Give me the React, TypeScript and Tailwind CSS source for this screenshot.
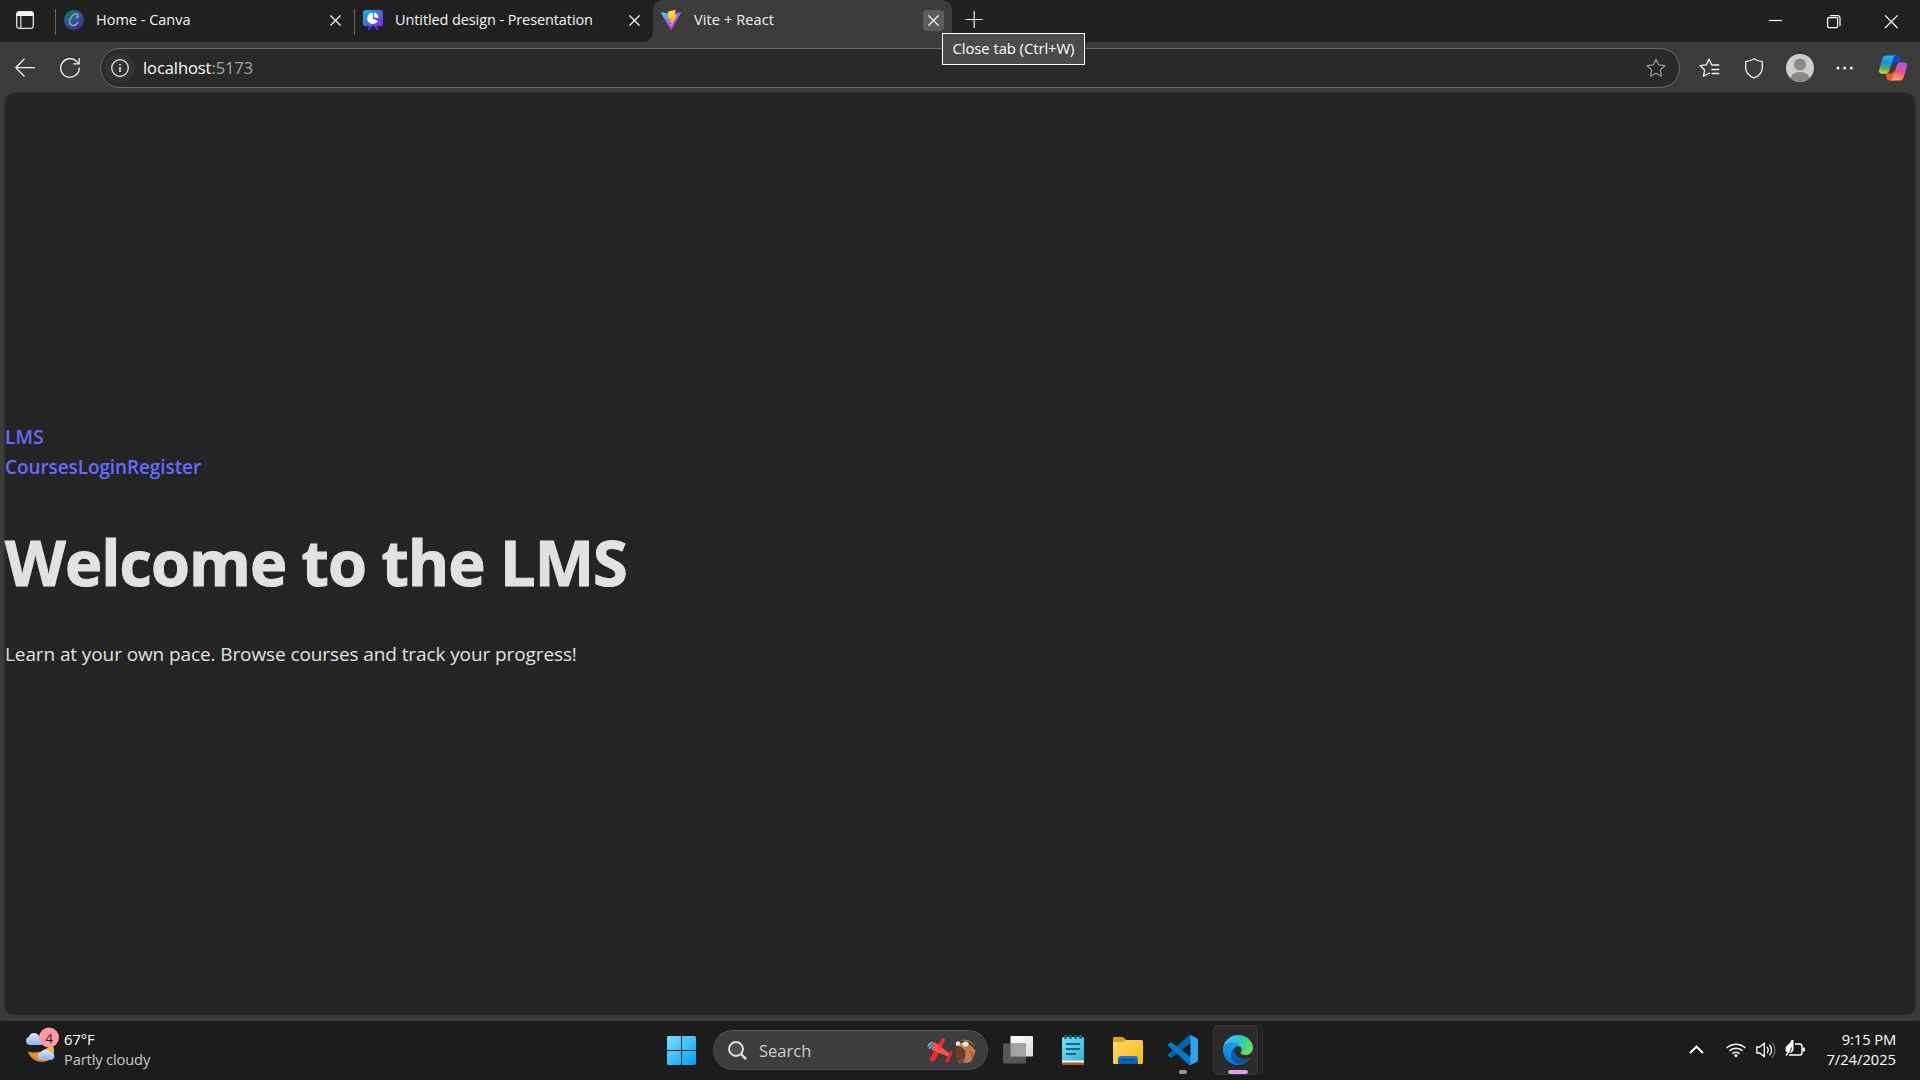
import React from "react";

const font = "font-['Open_Sans','Noto_Sans',sans-serif]";

function CloseX({ size = 11 }: { size?: number }) {
  return (
    <svg width={size} height={size} viewBox="0 0 11 11" fill="none" stroke="#f0f0f0" strokeWidth="1.3">
      <path d="M.4.4 10.6 10.6M10.6.4.4 10.6" />
    </svg>
  );
}

function CanvaIcon() {
  return (
    <svg width="20" height="20" viewBox="0 0 20 20">
      <defs>
        <linearGradient id="canva" x1="0.1" y1="0.1" x2="0.8" y2="1">
          <stop offset="0" stopColor="#12777c" />
          <stop offset="0.55" stopColor="#2b5590" />
          <stop offset="1" stopColor="#4c2689" />
        </linearGradient>
      </defs>
      <circle cx="10" cy="10" r="10" fill="url(#canva)" />
      <path d="M12.300 7.600c1.300-.3 2-1.300 1.800-2.300-.3-1.200-1.600-1.500-3-1.100C8 5.100 5.600 8.500 5.600 11.600c0 2.500 1.300 4 3.500 4 2 0 3.600-1.200 4.700-3" fill="none" stroke="#a6afb8" strokeWidth="1.300" strokeLinecap="round" />
    </svg>
  );
}

function PresentationIcon() {
  return (
    <svg width="20" height="20" viewBox="0 0 20 20">
      <defs>
        <linearGradient id="pres" x1="0" y1="0" x2="0.9" y2="1">
          <stop offset="0" stopColor="#00c4cc" />
          <stop offset="0.5" stopColor="#3f6fe0" />
          <stop offset="1" stopColor="#7d2ae8" />
        </linearGradient>
      </defs>
      <path d="M7.500 15.500 6 19M12.500 15.500l1.600 3.500" stroke="#6a22ee" strokeWidth="2.200" strokeLinecap="round" />
      <rect width="20" height="16.300" rx="2.500" fill="url(#pres)" />
      <path d="M9.800 2.800v5.700l5 2.600A5.600 5.600 0 1 1 9.800 2.800z" fill="#fff" />
      <path d="M11.100 2.500a5 5 0 0 1 4.300 5.500l-4.300-.6z" fill="#fff" />
    </svg>
  );
}

function ViteIcon() {
  return (
    <svg width="20" height="20" viewBox="0 0 256 257">
      <defs>
        <linearGradient id="va" x1="-.828%" x2="57.636%" y1="7.652%" y2="78.411%">
          <stop offset="0%" stopColor="#41D1FF" />
          <stop offset="100%" stopColor="#BD34FE" />
        </linearGradient>
        <linearGradient id="vb" x1="43.376%" x2="50.316%" y1="2.242%" y2="89.030%">
          <stop offset="0%" stopColor="#FFEA83" />
          <stop offset="8.333%" stopColor="#FFDD35" />
          <stop offset="100%" stopColor="#FFA800" />
        </linearGradient>
      </defs>
      <path fill="url(#va)" d="M255.153 37.938 134.897 252.976c-2.483 4.440-8.862 4.466-11.382.048L.875 37.958c-2.746-4.814 1.371-10.646 6.827-9.670l120.385 21.517a6.537 6.537 0 0 0 2.322-.004l117.867-21.483c5.438-.991 9.574 4.796 6.877 9.620Z" />
      <path fill="url(#vb)" d="M185.432.063 96.440 17.501a3.268 3.268 0 0 0-2.634 3.014l-5.474 92.456a3.268 3.268 0 0 0 3.997 3.378l24.777-5.718c2.318-.535 4.413 1.507 3.936 3.838l-7.361 36.047c-.495 2.426 1.782 4.500 4.151 3.780l15.304-4.649c2.372-.720 4.652 1.360 4.150 3.788l-11.698 56.621c-.732 3.542 3.979 5.473 5.943 2.437l1.313-2.028 72.516-144.720c1.215-2.423-.880-5.186-3.540-4.672l-25.505 4.922c-2.396.462-4.435-1.770-3.759-4.114l16.646-57.705c.677-2.350-1.370-4.583-3.769-4.113Z" />
    </svg>
  );
}

function TitleBar() {
  return (
    <header className="relative flex h-[42px] bg-[#202020] text-[14.5px] leading-[20px] text-[#f3f3f3]">
      <div className="flex w-[55px] shrink-0 pl-4 pt-[11px]">
        <svg width="18" height="18" viewBox="0 0 18 18" fill="none">
          <rect x=".7" y=".7" width="16.600" height="16.600" rx="2.500" stroke="#e0e0e0" strokeWidth="1.300" />
          <path d="M.5 5V3A2.500 2.500 0 0 1 3 .5h12A2.500 2.500 0 0 1 17.500 3v2z" fill="#f3f3f3" />
          <path d="M4.800 5v12.300" stroke="#e0e0e0" strokeWidth="1.200" />
        </svg>
      </div>
      <div className="flex w-[299px] shrink-0 pt-[10px]">
        <div className="-mt-px h-[26px] w-px bg-[#666]" />
        <div className="ml-2"><CanvaIcon /></div>
        <span className="ml-[12px] grow whitespace-nowrap">Home - Canva</span>
        <div className="mr-[13px] mt-[5px]"><CloseX /></div>
      </div>
      <div className="flex w-[299px] shrink-0 pt-[10px]">
        <div className="-mt-px h-[26px] w-px bg-[#666]" />
        <div className="ml-2"><PresentationIcon /></div>
        <span className="ml-[12px] grow whitespace-nowrap tracking-[-0.1px]">Untitled design - Presentation</span>
        <div className="mr-[13px] mt-[5px]"><CloseX /></div>
      </div>
      <div className="relative flex w-[299px] shrink-0 rounded-t-[10px] bg-[#3b3b3b] pt-[10px]">
        <svg className="absolute -left-[10px] bottom-0" width="10" height="10"><path d="M10 0v10H0A10 10 0 0 0 10 0z" fill="#3b3b3b" /></svg>
        <svg className="absolute -right-[10px] bottom-0" width="10" height="10"><path d="M0 0v10h10A10 10 0 0 1 0 0z" fill="#3b3b3b" /></svg>
        <div className="ml-2"><ViteIcon /></div>
        <span className="ml-[13px] grow whitespace-nowrap tracking-[0.12px]">Vite + React</span>
        <div className="mr-2 flex h-[21px] w-[21px] items-center justify-center rounded-[4px] bg-[#5c5c5c]"><CloseX /></div>
      </div>
      <svg className="ml-[13px] mt-[11px]" width="18" height="18" stroke="#f3f3f3" strokeWidth="1.200"><path d="M.5 8.500h17M9.200 0v17" /></svg>
      <div className="ml-auto flex pr-[22px] pt-[15px]">
        <svg width="130" height="14" viewBox="0 0 130 14" fill="none" stroke="#fff" strokeWidth="1.200">
          <path d="M1 5.500h13" />
          <rect x="59.600" y="2.600" width="10" height="10" rx="1" />
          <path d="M62 .6h7.500a2.500 2.500 0 0 1 2.500 2.500V11" />
          <path d="m117 .4 12.600 12.600m0-12.600L117 13" />
        </svg>
      </div>
    </header>
  );
}

const star = "M10 1.200l2.700 5.700 6.200.8-4.600 4.200 1.200 6.300L10 15.200 4.500 18.200l1.200-6.300L1.100 7.700l6.200-.8z";

function CopilotIcon() {
  return (
    <svg width="28" height="26" viewBox="0 0 28 26">
      <defs>
        <linearGradient id="c1" x1="0.5" y1="0" x2="0.3" y2="1">
          <stop offset="0" stopColor="#18b6f5" />
          <stop offset="0.4" stopColor="#1d8fe0" />
          <stop offset="0.7" stopColor="#47b06b" />
          <stop offset="1" stopColor="#f2cf19" />
        </linearGradient>
        <linearGradient id="c2" x1="0.7" y1="0" x2="0.4" y2="1">
          <stop offset="0" stopColor="#a457e8" />
          <stop offset="0.5" stopColor="#ec4f8c" />
          <stop offset="1" stopColor="#ffa865" />
        </linearGradient>
      </defs>
      <path d="M14 .5h3.500c2 0 2.800 1.200 3.300 3l1 3.500h-4.600c-2.200 0-3 1.200-3.600 3L11 4z" fill="#1747c8" />
      <path d="M7 18.500h5.500L15 16l2.500 6-2 3.500h-5c-1.900 0-2.500-1.200-3-3z" fill="#f2552c" />
      <path d="M7.500.5h9.300c-1.800.3-2.400 1.800-3 3.900L10.500 15c-.8 2.700-1.900 3.800-4.300 3.800H3c-2.700 0-3.400-2.200-2.700-4.600L3 4.500C3.800 1.800 5 .5 7.500.5z" fill="url(#c1)" />
      <path d="M20.500 25.500h-9.300c1.800-.3 2.400-1.800 3-3.900L17.500 11c.8-2.700 1.900-3.800 4.300-3.800H25c2.700 0 3.400 2.200 2.700 4.600L25 21.500c-.8 2.700-2 4-4.500 4z" fill="url(#c2)" />
    </svg>
  );
}

function Toolbar() {
  return (
    <div className="flex h-[51px] items-start bg-[#3b3b3b] pt-[6px]">
      <svg className="ml-[15px] mt-[10px]" width="20" height="20" fill="none" stroke="#f3f3f3" strokeWidth="1.300"><path d="M20 9.700H.8M9.500.7.8 9.700l8.700 8.800" /></svg>
      <svg className="ml-[25px] mt-[10px]" width="21" height="21" fill="none" stroke="#f3f3f3" strokeWidth="1.300"><path d="M19.300 9.800A9.300 9.300 0 1 1 17 3.900l2 1.900M19.200 0v5.900h-6" /></svg>
      <div className="ml-[19px] flex h-10 w-[1580px] items-center rounded-full border border-[#6b6b6b] bg-[#292929] pl-[4px]">
        <div className="flex h-[30px] w-[30px] items-center justify-center rounded-full bg-[#323232]">
          <svg width="18" height="18" fill="none" stroke="#f3f3f3" strokeWidth="1.200"><circle cx="9" cy="9" r="8.300" /><path d="M9 8v5M9 5v1.500" strokeWidth="1.500" /></svg>
        </div>
        <div className="-mt-px ml-[8px] grow text-[16.500px] leading-6 tracking-[-0.08px] text-white">localhost<span className="text-[#a5a5a5]">:5173</span></div>
        <svg className="mr-[13px]" width="20" height="20" fill="none" stroke="#9a9a9a" strokeWidth="1.200" strokeLinejoin="round"><path d={star} /></svg>
      </div>
      <svg className="ml-[19px] mt-[10px]" width="21" height="20" fill="none" stroke="#f3f3f3" strokeWidth="1.300" strokeLinejoin="round">
        <path d="M10.800 15.500 10 15.200 4.500 18.200l1.200-6.300L1.100 7.700l6.200-.8L10 1.200l2.700 5.700" /><path d="M12.500 7h7.800M12.500 11.500h7.800M12.500 15.500h7.800" />
      </svg>
      <svg className="ml-[25px] mt-[10px]" width="18" height="21" fill="none" stroke="#f3f3f3" strokeWidth="1.300" strokeLinejoin="round"><path d="M9 .8C11.500 2.500 14.300 3.500 17.300 3.700V9.500c0 5-3.300 8.500-8.300 10.300C4 18 .7 14.500.7 9.500V3.700C3.700 3.500 6.500 2.500 9 .8z" /></svg>
      <svg className="ml-[23px] mt-[6px]" width="28" height="28">
        <defs><clipPath id="av"><circle cx="14" cy="14" r="14" /></clipPath></defs>
        <g clipPath="url(#av)"><rect width="28" height="28" fill="#cfcdcb" /><circle cx="14" cy="10.500" r="6" fill="#8b8886" /><ellipse cx="14" cy="26" rx="10" ry="8" fill="#8b8886" /></g>
      </svg>
      <svg className="ml-[22px] mt-[18px]" width="18" height="4" fill="#f3f3f3"><circle cx="2" cy="2" r="1.500" /><circle cx="8.700" cy="2" r="1.500" /><circle cx="15.300" cy="2" r="1.500" /></svg>
      <div className="ml-[25px] mt-[7px]"><CopilotIcon /></div>
    </div>
  );
}

function Page() {
  return (
    <main className="mx-[5px] h-[922px] rounded-[10px] bg-[#242424] pt-[329px] shadow-[0_0_3px_rgba(0,0,0,0.35)]">
      <nav className="text-[19px] font-semibold leading-[30px] tracking-[-0.1px] text-[#646cff]">
        <div className="tracking-[0.2px]">LMS</div>
        <div className="flex"><a>Courses</a><a>Login</a><a>Register</a></div>
      </nav>
      <h1 className="mt-[45px] whitespace-nowrap text-[63px] font-bold leading-[70px] tracking-[-0.95px] text-[#e2e2e2] [-webkit-text-stroke:1px_#e2e2e2]">Welcome to the LMS</h1>
      <p className="mt-[42px] text-[19px] leading-[30px] tracking-[-0.1px] text-[#e2e2e2]">Learn at your own pace. Browse courses and track your progress!</p>
    </main>
  );
}

function WeatherIcon() {
  return (
    <svg width="36" height="36" viewBox="0 0 36 36">
      <defs>
        <linearGradient id="cl" x1="0" y1="0" x2="0" y2="1"><stop offset="0" stopColor="#e0ebff" /><stop offset="1" stopColor="#8db3f2" /></linearGradient>
        <linearGradient id="mo" x1="1" y1="0" x2="0" y2="1"><stop offset="0" stopColor="#ffcb3a" /><stop offset="1" stopColor="#e8701a" /></linearGradient>
      </defs>
      <path d="M26 16c4 4 4 11 0 15.500-6 6-20 4-23-7 9 3 20-1 23-8.500z" fill="url(#mo)" />
      <path d="M4.500 18A4.300 4.300 0 0 1 4 9.700 5.500 5.500 0 0 1 14 9a4.500 4.500 0 0 1 2 9z" fill="url(#cl)" />
      <path d="M16 33a3.800 3.800 0 0 1 0-7.500A5 5 0 0 1 25 25a4.100 4.100 0 0 1 1.500 8z" fill="url(#cl)" />
      <circle cx="24" cy="10.500" r="10" fill="#ff99a4" />
      <text x="24" y="15.500" textAnchor="middle" fontSize="13.500" fill="#1c1c1c" fontFamily="Open Sans">4</text>
    </svg>
  );
}

function SearchArt() {
  return (
    <svg width="50" height="26" viewBox="0 0 50 26">
      <path d="M15 .3c1.500-.6 3.500.3 3 2L8 22.500c-1 1.700-6 .5-5.500-1.500z" fill="#f6262d" />
      <path d="M2.500 6.500c1-2.500 4-3.500 6.500-1.500l13.500 10.500c1.500 1 1 3-.5 3.200L5.500 12.500z" fill="#fb5050" />
      <path d="M23.500 12.500c1.500-.2 2.500.7 2 2l-4 9c-.6 1.200-3.400 1-3-.8z" fill="#f0242b" />
      <circle cx="4" cy="7.500" r="3" fill="#56839c" /><path d="M.3 8.500 5 3.500M2 11l1.500-2" stroke="#9cc7db" strokeWidth="1" />
      <path d="M29 7c2-6 13-8 18.500 0 1 2 1 5 .5 8l-3.500 8c-5 3-11 2-13 1.500C29 20 28.500 13 29 7z" fill="#bd7c49" />
      <path d="M29 8c4 0 8 2 9.500 5.500C39 18 37 24 33 24.500c-5-2-4.500-10-4-16.500z" fill="#68401f" />
      <path d="M29 5c7-3 15-1 19.500 6" fill="none" stroke="#4e3019" strokeWidth="2" />
      <circle cx="31" cy="5.500" r="2.300" fill="#dce9ef" /><ellipse cx="38.500" cy="6" rx="3.200" ry="2.600" fill="#dce9ef" />
      <path d="M42 13c3 1 4 4 2 7" fill="none" stroke="#8a5229" strokeWidth="1" /><path d="m32 22 3-1 3 3-4 1.500z" fill="#55505f" />
    </svg>
  );
}

function NotepadIcon() {
  return (
    <svg width="22" height="30" viewBox="0 0 22 30">
      <defs><linearGradient id="np" x1="0" y1="0" x2="1" y2="1"><stop offset="0" stopColor="#7fe0f3" /><stop offset="1" stopColor="#35b0d5" /></linearGradient></defs>
      <rect y="24" width="22" height="6" rx="1" fill="#b25a1c" /><rect y="22" width="22" height="5.500" fill="#f3f3f3" />
      <path d="M0 3.500Q0 2 1.500 2h19Q22 2 22 3.500v22H0z" fill="url(#np)" />
      <path d="M3.500 0v4M8.500 0v4M13.500 0v4M18.500 0v4" stroke="#0b6a87" strokeWidth="2.400" />
      <path d="M4 9h14M4 14h14M4 19h10" stroke="#0b6a87" strokeWidth="1.900" />
    </svg>
  );
}

function FolderIcon() {
  return (
    <svg width="30" height="27" viewBox="0 0 30 27">
      <defs><linearGradient id="fo" x1="0" y1="0" x2="1" y2="1"><stop offset="0" stopColor="#ffdc70" /><stop offset="1" stopColor="#fbb80b" /></linearGradient>
        <linearGradient id="fb" x1="0" y1="0" x2="0" y2="1"><stop offset="0" stopColor="#1a7fd6" /><stop offset="1" stopColor="#075bb0" /></linearGradient></defs>
      <path d="M0 1.500Q0 0 1.500 0h7.500q1 0 2 1l3 2.500V8H0z" fill="#e3a006" />
      <path d="M0 5h10l3-2h15.500Q30 3 30 4.500v21Q30 27 28.500 27h-27Q0 27 0 25.500z" fill="url(#fo)" />
      <path d="M5 27v-5q0-3 3-3h14q3 0 3 3v5z" fill="url(#fb)" /><path d="M8.500 22.600h13" stroke="#053c7d" strokeWidth="1.200" />
    </svg>
  );
}

function CodeIcon() {
  return (
    <svg width="30" height="30" viewBox="0 0 100 100">
      <path d="M96.500 10.700 75.900.8a6.200 6.200 0 0 0-7.100 1.200L1.300 63.600a4.200 4.200 0 0 0 0 6.100l5.500 5a4.200 4.200 0 0 0 5.300.3l81.200-61.700c2.700-2 6.700-.1 6.700 3.300v-.2a6.200 6.200 0 0 0-3.500-5.700z" fill="#0065a9" />
      <path d="m96.500 89.300-20.600 9.900a6.200 6.200 0 0 1-7.100-1.200L1.300 36.400a4.200 4.200 0 0 1 0-6.100l5.500-5a4.200 4.200 0 0 1 5.300-.3l81.200 61.700c2.700 2 6.700.1 6.700-3.300v.2a6.200 6.200 0 0 1-3.500 5.700z" fill="#007acc" />
      <path d="M75.900 99.200a6.200 6.200 0 0 1-7.100-1.200c2.300 2.300 6.200.7 6.200-2.600V4.600C75 1.300 71.100-.3 68.800 2a6.200 6.200 0 0 1 7.100-1.200l20.600 9.900a6.200 6.200 0 0 1 3.500 5.700v67.200a6.200 6.200 0 0 1-3.500 5.700z" fill="#29a5f3" />
    </svg>
  );
}

function EdgeIcon() {
  return (
    <svg width="30" height="30" viewBox="0 0 256 256">
      <defs>
        <linearGradient id="e1" x1="0.2" x2="0.95" y1="0.5" y2="0.5"><stop offset="0" stopColor="#0c59a4" /><stop offset="1" stopColor="#114a8b" /></linearGradient>
        <linearGradient id="e2" x1="0.7" x2="0.3" y1="0.1" y2="0.9"><stop offset="0" stopColor="#1b9de2" /><stop offset="0.5" stopColor="#1595df" /><stop offset="1" stopColor="#0078d7" /></linearGradient>
        <linearGradient id="e3" x1="0" x2="1" y1="0.2" y2="0.6"><stop offset="0" stopColor="#35c1f1" /><stop offset="0.4" stopColor="#2fc2df" /><stop offset="0.75" stopColor="#43d08a" /><stop offset="1" stopColor="#6be34d" /></linearGradient>
      </defs>
      <path fill="url(#e1)" d="M231 190.500c-3.400 1.800-6.900 3.400-10.500 4.700a101.900 101.900 0 0 1-35.900 6.500c-47.300 0-88.500-32.500-88.500-74.300a31.500 31.500 0 0 1 16.400-27.300c-42.800 1.800-53.800 46.400-53.800 72.500 0 73.900 68.100 81.400 82.800 81.400 7.900 0 19.800-2.300 27-4.600l1.300-.4a128.300 128.300 0 0 0 66.600-52.800 4 4 0 0 0-5.400-5.700z" />
      <path fill="url(#e2)" d="M105.700 241.400a79.200 79.200 0 0 1-22.700-21.300 80.700 80.700 0 0 1 29.500-120c3.200-1.500 8.500-4.100 15.600-4a32.400 32.400 0 0 1 25.700 13 31.900 31.900 0 0 1 6.300 18.700c0-.2 24.500-79.600-80-79.600-43.900 0-80 41.600-80 78.200a130.200 130.200 0 0 0 12.100 56 128 128 0 0 0 156.400 67.100 75.500 75.500 0 0 1-62.800-8z" />
      <path fill="url(#e3)" d="M152.300 148.900c-.9 1-3.400 2.500-3.400 5.600 0 2.600 1.700 5.200 4.800 7.300 14.300 10 41.400 8.600 41.500 8.600a59.600 59.600 0 0 0 30.300-8.300 61.400 61.400 0 0 0 30.400-52.900c.3-22.400-8-37.300-11.300-43.900C223.500 23.900 177.700 0 128 0A128 128 0 0 0 0 126.200c.5-36.500 36.800-66 80-66 3.500 0 23.500.3 42 10.100 16.300 8.600 24.900 18.900 30.800 29.200 6.200 10.700 7.300 24.100 7.300 29.500 0 5.300-2.700 13.300-7.800 19.900z" />
    </svg>
  );
}

function Taskbar() {
  return (
    <footer className="flex h-[59px] bg-[#1c1c1c] text-[14.700px]">
      <div className="flex w-[667px] pl-[25px]">
        <div className="mt-[6px]"><WeatherIcon /></div>
        <div className="ml-[3px] mt-[8px] leading-[20px]">
          <div className="text-white">67°F</div>
          <div className="text-[#c8c8c8] tracking-[-0.15px]">Partly cloudy</div>
        </div>
      </div>
      <svg className="mt-[15px]" width="29" height="29">
        <defs><linearGradient id="win" gradientUnits="userSpaceOnUse" x1="0" y1="0" x2="29" y2="29"><stop offset="0" stopColor="#82dcff" /><stop offset="0.5" stopColor="#38c3fb" /><stop offset="1" stopColor="#0899fb" /></linearGradient></defs>
        <path d="M1 0h13v14H0V1zM15 0h13l1 1v13H15zM0 15h14v14H1l-1-1zM15 15h14v13l-1 1H15z" fill="url(#win)" />
      </svg>
      <div className="ml-[17px] mt-[9px] flex h-[40px] w-[275px] rounded-full border border-[#484848] border-t-[#5c5c5c] bg-[#3c3c3c]">
        <svg className="ml-[14px] mt-[10px]" width="19" height="19" fill="none" stroke="#e4e4e4"><circle cx="8" cy="8" r="7" strokeWidth="1.900" fill="#505050" /><path d="m13 13 5 5.200" strokeWidth="2.400" /></svg>
        <span className="ml-[12px] mt-[8px] grow text-[16.500px] leading-6 text-[#d0d0d0]">Search</span>
        <div className="mr-[10px] mt-[7px]"><SearchArt /></div>
      </div>
      <svg className="ml-[15px] mt-[15px]" width="30" height="28">
        <defs><linearGradient id="tv" x1="0" y1="0" x2="1" y2="1"><stop offset="0" stopColor="#fff" /><stop offset="1" stopColor="#dcdcdc" /></linearGradient></defs>
        <rect x="7.500" y="0" width="22.500" height="20.500" rx="1" fill="url(#tv)" /><rect y="7.500" width="23" height="20" rx="1" fill="#5c5c5c" opacity=".92" /><rect x="7.500" y="7.500" width="15.500" height="13" fill="#a3a3a3" />
      </svg>
      <div className="ml-[29px] mt-[14px]"><NotepadIcon /></div>
      <div className="ml-[29px] mt-[16px]"><FolderIcon /></div>
      <div className="ml-[25px] flex flex-col items-center pt-[14px]"><CodeIcon /><div className="mt-[5px] h-[4px] w-[8px] rounded-full bg-[#999]" /></div>
      <div className="ml-[15px] mt-[4px] h-[50px] w-[50px] rounded-[6px] border border-[#333] bg-[#222]">
        <div className="-ml-px -mt-px flex h-[50px] w-[45px] flex-col items-center rounded-[6px] border border-[#373737] bg-[#2a2a2a] pt-[9px]">
          <div className="ml-[4px]"><EdgeIcon /></div>
          <div className="ml-[4px] mt-[5px] h-[4px] w-[20px] shrink-0 rounded-full bg-[#dd9ee5]" />
        </div>
      </div>
      <svg className="ml-auto mt-[24px]" width="15" height="9" fill="none" stroke="#fff" strokeWidth="2"><path d="m1 8 6.500-6.300L14 8" /></svg>
      <svg className="ml-[22px] mt-[20px]" width="20" height="17" fill="none" stroke="#fff" strokeWidth="1.500"><path d="M.7 7a13.200 13.200 0 0 1 18.600 0M3.500 9.900a9.200 9.200 0 0 1 13 0M6.300 12.700a5.200 5.200 0 0 1 7.400 0" /><circle cx="10" cy="14.500" r="1.600" fill="#fff" stroke="none" /></svg>
      <svg className="ml-[10px] mt-[20px]" width="21" height="18" fill="none" stroke="#fff" strokeWidth="1.300" strokeLinejoin="round"><path d="M.8 6v6h3l4.500 3.800V2.200L3.800 6z" /><path d="M11 6c1.500 1.800 1.500 4.200 0 6M13.300 3.700c3 3 3 7.600 0 10.600" /><path d="M15.700 1.300c4.300 4.300 4.300 11.100 0 15.400" stroke="#666" /></svg>
      <svg className="ml-[8px] mt-[18px]" width="21" height="20" fill="none" stroke="#fff" strokeWidth="1.400"><path d="M10 5h4.500Q17 5 17 7.500v6q0 2.500-2.500 2.500H4" /><path d="M18.700 8.500v4" strokeWidth="2.400" /><path d="M8.500 1v9c0 3-2.500 4-4 4-2.500 0-4-1.500-4-4 0-4 4-4 6-9z" fill="#fff" stroke="none" /><path d="M1 16.500c3-1 5-4 5.500-8" stroke="#1c1c1c" strokeWidth="1" /><path d="M1 16.500 3 14" /></svg>
      <div className="mr-6 mt-[8px] w-[90px] text-right leading-[20px] text-white"><div className="tracking-[-0.1px]">9:15 PM</div><div>7/24/2025</div></div>
    </footer>
  );
}

export default function App() {
  return (
    <div className={`${font} relative h-[1080px] w-[1920px] overflow-hidden bg-[#3b3b3b]`}>
      <TitleBar />
      <Toolbar />
      <Page />
      <div className="h-[6px]" />
      <Taskbar />
      <div className="absolute left-[942px] top-[33px] flex h-8 w-[143px] items-center justify-center whitespace-nowrap border border-white bg-[#4a4a4a] pb-0.5 text-[14.800px] leading-5 tracking-[-0.05px] text-white">Close tab (Ctrl+W)</div>
    </div>
  );
}
